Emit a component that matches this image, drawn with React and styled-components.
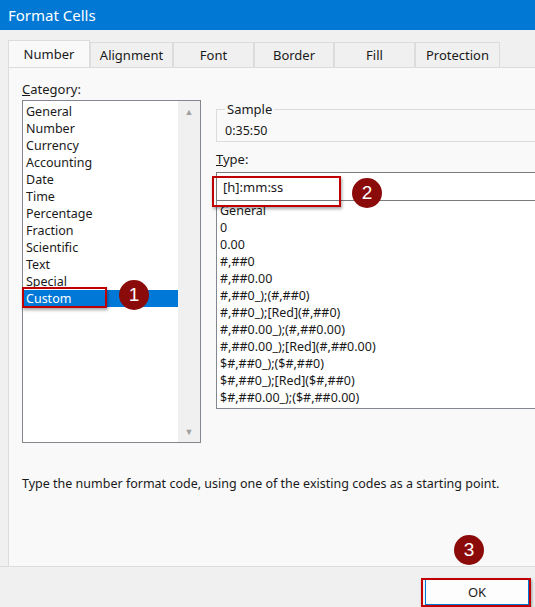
import styled, { createGlobalStyle } from 'styled-components'

const Global = createGlobalStyle`
  body { margin: 0; font-family: "Noto Sans", "Open Sans", sans-serif; font-size: 12.5px; color: #1a1a1a; }
`

const Window = styled.div`
  width: 535px; height: 607px; background: #f0f0f0; position: relative; overflow: hidden;
  display: flex; flex-direction: column;
`
const TitleBar = styled.div`
  height: 30px; background: #0078d4; color: #fff; font-size: 15px;
  display: flex; align-items: center; padding-left: 8px;
`
const Tabs = styled.div`
  display: flex; padding: 10px 0 0 8px; height: 27px;
`
const Tab = styled.div`
  width: ${p => p.w}px; display: flex; align-items: center; justify-content: center;
  border: 1px solid #dcdcdc; border-bottom: none; margin-top: ${p => p.active ? 0 : 2}px;
  background: ${p => p.active ? '#f9f9f9' : '#f0f0f0'}; font-size: 13px;
`
const Panel = styled.div`
  margin-left: 8px; height: 499px; background: #f9f9f9; border-top: 1px solid #dcdcdc;
  border-left: 1px solid #dcdcdc; padding: 12px 0 0 13px; box-sizing: border-box;
`
const Columns = styled.div`display: flex; gap: 15px;`
const Label = styled.div`height: 20px; font-size: 13px;`
const ListBox = styled.div`
  border: 1px solid #828790; background: #fff; display: flex;
  width: ${p => p.w}px; height: ${p => p.h}px; box-sizing: border-box;
`
const Items = styled.div`flex: 1; padding-top: 2px;`
const Item = styled.div`
  height: 17px; line-height: 17px; padding-left: 3px; font-size: 12.5px;
  background: ${p => p.sel ? '#0078d7' : 'transparent'}; color: ${p => p.sel ? '#fff' : '#1a1a1a'};
`
const Scroll = styled.div`
  width: 22px; background: #f0f0f0; display: flex; flex-direction: column; justify-content: space-between;
  align-items: center; color: #a0a0a0; font-size: 9px; padding: 4px 0;
`
const Right = styled.div`width: 330px; padding-top: 20px;`
const Group = styled.fieldset`
  border: 1px solid #dcdcdc; border-right: none; margin: 0; padding: 4px 8px 8px; height: 42px; box-sizing: border-box;
  legend { padding: 0 2px; font-size: 13px; margin-left: 0; }
`
const TypeInput = styled.div`
  margin-top: 2px; height: 27px; border: 1px solid #7a7a7a; border-right: none; background: #fff;
  display: flex; align-items: center; padding-left: 6px; font-size: 13px;
`
const TypeList = styled.div`
  height: 206px; border: 1px solid #828790; border-top: none; border-right: none; background: #fff;
  padding-top: 1px; overflow: hidden;
`
const Desc = styled.div`margin-top: 32px; font-size: 12.5px;`
const Footer = styled.div`
  flex: 1; border-top: 1px solid #dcdcdc; display: flex; justify-content: flex-end; align-items: flex-end; padding: 0 6px 2px 0;
`
const Button = styled.div`
  width: 102px; height: 24px; background: #fdfdfd; border: 1px solid #0078d7;
  display: flex; align-items: center; justify-content: center; font-size: 13px;
`
const Box = styled.div`
  position: absolute; border: 2px solid #c00000; box-shadow: 1px 2px 3px rgba(0,0,0,.35);
  left: ${p => p.x}px; top: ${p => p.y}px; width: ${p => p.w}px; height: ${p => p.h}px;
`
const Badge = styled.div`
  position: absolute; width: 30px; height: 30px; border-radius: 50%; background: #8b0a0a; color: #fff;
  font-family: "Liberation Sans", Arial, sans-serif; font-size: 19px;
  display: flex; align-items: center; justify-content: center;
  left: ${p => p.x - 15}px; top: ${p => p.y - 15}px;
`

const categories = ['General', 'Number', 'Currency', 'Accounting', 'Date', 'Time', 'Percentage', 'Fraction', 'Scientific', 'Text', 'Special', 'Custom']
const types = ['General', '0', '0.00', '#,##0', '#,##0.00', '#,##0_);(#,##0)', '#,##0_);[Red](#,##0)', '#,##0.00_);(#,##0.00)', '#,##0.00_);[Red](#,##0.00)', '$#,##0_);($#,##0)', '$#,##0_);[Red]($#,##0)', '$#,##0.00_);($#,##0.00)']
const tabs = [['Number', 80], ['Alignment', 81], ['Font', 79], ['Border', 78], ['Fill', 79], ['Protection', 83]]

export default function App() {
  return <Window>
    <Global />
    <TitleBar>Format Cells</TitleBar>
    <Tabs>
      {tabs.map(([t, w], i) => <Tab key={t} w={w} active={i === 0}>{t}</Tab>)}
    </Tabs>
    <Panel>
      <Columns>
        <div>
          <Label><u>C</u>ategory:</Label>
          <ListBox w={179} h={343}>
            <Items>
              {categories.map(c => <Item key={c} sel={c === 'Custom'}>{c}</Item>)}
            </Items>
            <Scroll><span>▲</span><span>▼</span></Scroll>
          </ListBox>
        </div>
        <Right>
          <Group><legend>Sample</legend>0:35:50</Group>
          <Label style={{ marginTop: 8 }}><u>T</u>ype:</Label>
          <TypeInput>[h]:mm:ss</TypeInput>
          <TypeList>
            {types.map(t => <Item key={t}>{t}</Item>)}
          </TypeList>
        </Right>
      </Columns>
      <Desc>Type the number format code, using one of the existing codes as a starting point.</Desc>
    </Panel>
    <Footer><Button>OK</Button></Footer>
    <Box x={22} y={287} w={81} h={17} />
    <Box x={212} y={176} w={125} h={27} />
    <Box x={421} y={578} w={106} h={25} />
    <Badge x={134} y={295}>1</Badge>
    <Badge x={367} y={193}>2</Badge>
    <Badge x={469} y={550}>3</Badge>
  </Window>
}
